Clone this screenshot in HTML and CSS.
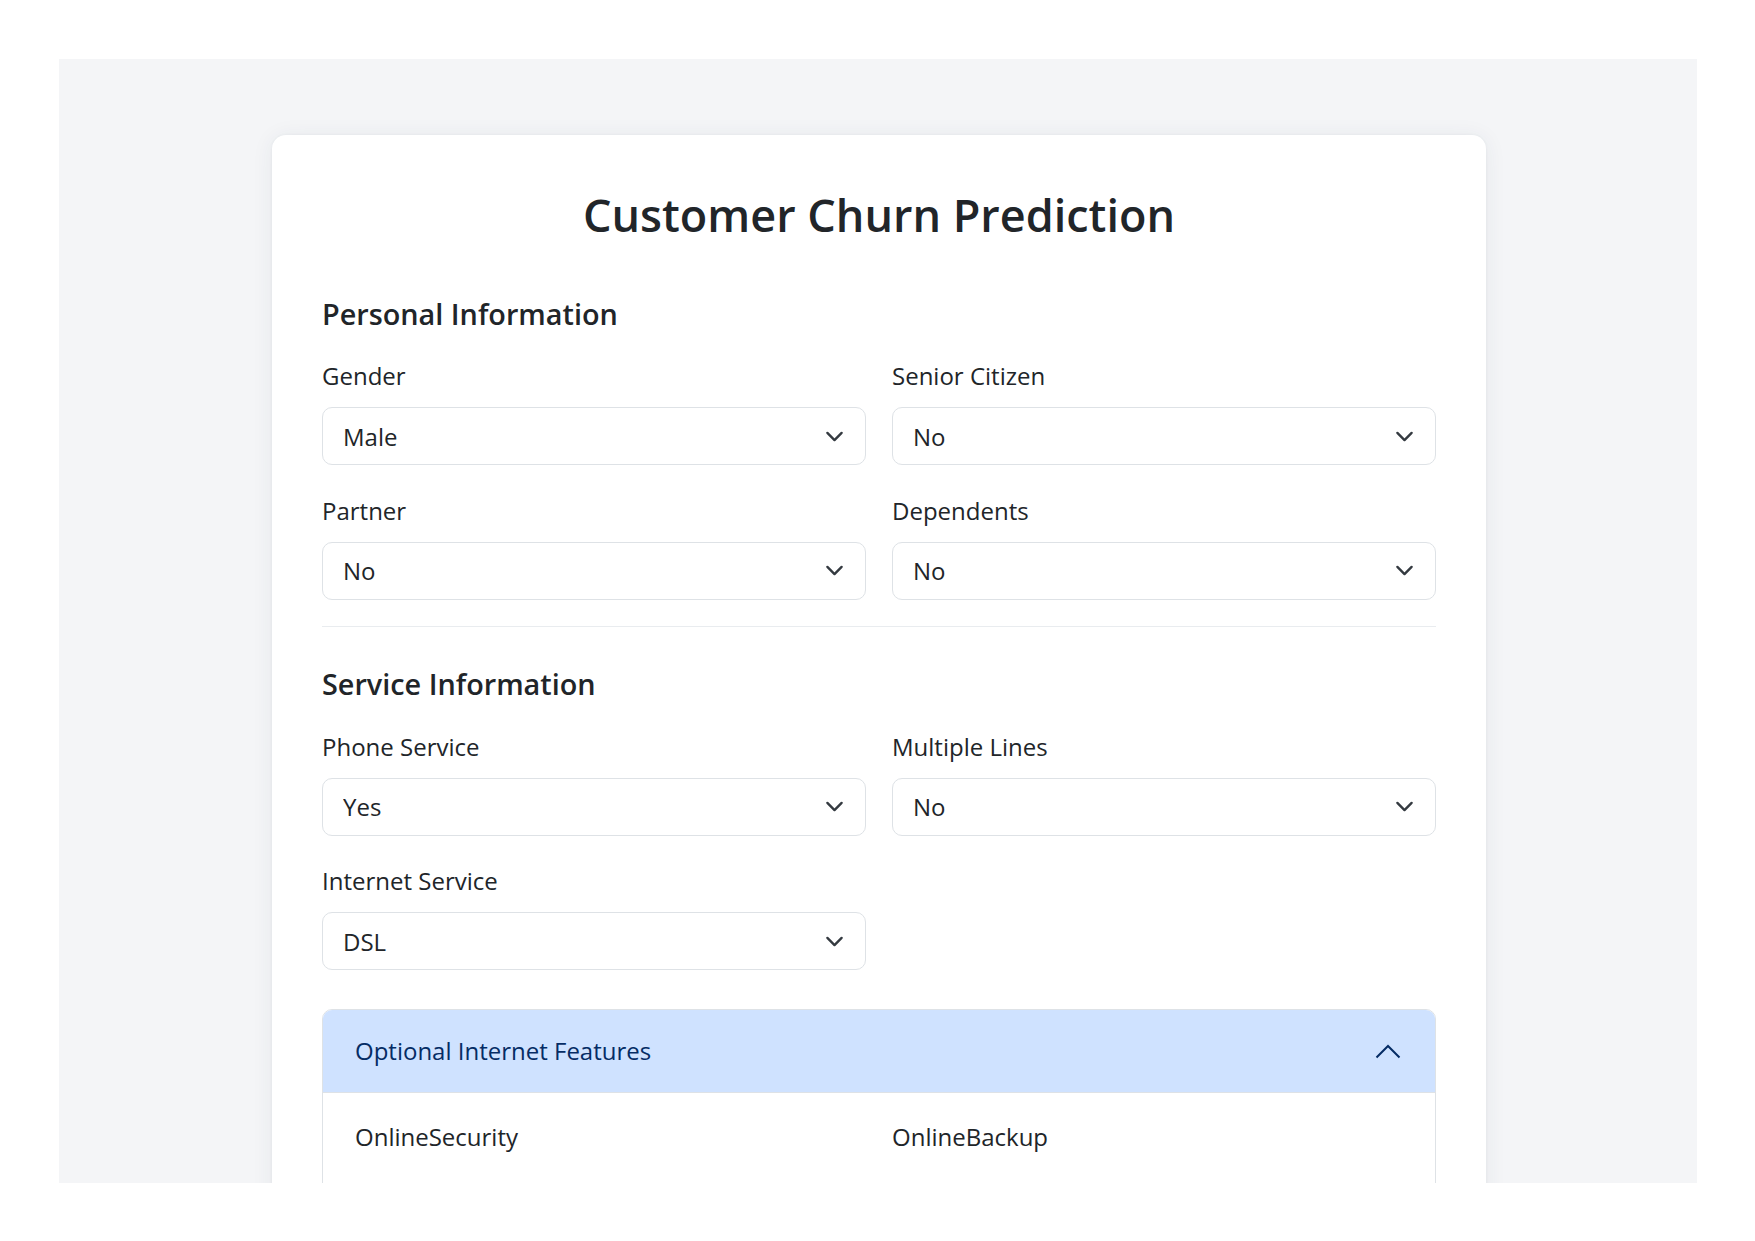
FILE: index.html
```
<!DOCTYPE html>
<html lang="en">
<head>
<meta charset="utf-8">
<title>Customer Churn Prediction</title>
<link rel="stylesheet" href="styles.css">
</head>
<body>
<div class="viewport">
  <main class="card">
    <h1 class="title">Customer Churn Prediction</h1>

    <section class="section">
      <h2 class="section-title">Personal Information</h2>
      <div class="grid">
        <div class="field">
          <label class="label" for="gender">Gender</label>
          <div class="select-wrap">
            <select id="gender" class="select"><option>Male</option><option>Female</option></select>
            <svg class="chev" viewBox="0 0 16 16" width="19" height="19"><path d="M2 5l6 6 6-6" fill="none" stroke="#343a40" stroke-width="2" stroke-linecap="round" stroke-linejoin="round"/></svg>
          </div>
        </div>
        <div class="field">
          <label class="label" for="senior">Senior Citizen</label>
          <div class="select-wrap">
            <select id="senior" class="select"><option>No</option><option>Yes</option></select>
            <svg class="chev" viewBox="0 0 16 16" width="19" height="19"><path d="M2 5l6 6 6-6" fill="none" stroke="#343a40" stroke-width="2" stroke-linecap="round" stroke-linejoin="round"/></svg>
          </div>
        </div>
        <div class="field">
          <label class="label" for="partner">Partner</label>
          <div class="select-wrap">
            <select id="partner" class="select"><option>No</option><option>Yes</option></select>
            <svg class="chev" viewBox="0 0 16 16" width="19" height="19"><path d="M2 5l6 6 6-6" fill="none" stroke="#343a40" stroke-width="2" stroke-linecap="round" stroke-linejoin="round"/></svg>
          </div>
        </div>
        <div class="field">
          <label class="label" for="dependents">Dependents</label>
          <div class="select-wrap">
            <select id="dependents" class="select"><option>No</option><option>Yes</option></select>
            <svg class="chev" viewBox="0 0 16 16" width="19" height="19"><path d="M2 5l6 6 6-6" fill="none" stroke="#343a40" stroke-width="2" stroke-linecap="round" stroke-linejoin="round"/></svg>
          </div>
        </div>
      </div>
    </section>

    <hr class="divider">

    <section class="section">
      <h2 class="section-title">Service Information</h2>
      <div class="grid">
        <div class="field">
          <label class="label" for="phone">Phone Service</label>
          <div class="select-wrap">
            <select id="phone" class="select"><option>Yes</option><option>No</option></select>
            <svg class="chev" viewBox="0 0 16 16" width="19" height="19"><path d="M2 5l6 6 6-6" fill="none" stroke="#343a40" stroke-width="2" stroke-linecap="round" stroke-linejoin="round"/></svg>
          </div>
        </div>
        <div class="field">
          <label class="label" for="lines">Multiple Lines</label>
          <div class="select-wrap">
            <select id="lines" class="select"><option>No</option><option>Yes</option></select>
            <svg class="chev" viewBox="0 0 16 16" width="19" height="19"><path d="M2 5l6 6 6-6" fill="none" stroke="#343a40" stroke-width="2" stroke-linecap="round" stroke-linejoin="round"/></svg>
          </div>
        </div>
        <div class="field">
          <label class="label" for="internet">Internet Service</label>
          <div class="select-wrap">
            <select id="internet" class="select"><option>DSL</option><option>Fiber optic</option><option>No</option></select>
            <svg class="chev" viewBox="0 0 16 16" width="19" height="19"><path d="M2 5l6 6 6-6" fill="none" stroke="#343a40" stroke-width="2" stroke-linecap="round" stroke-linejoin="round"/></svg>
          </div>
        </div>
      </div>

      <div class="accordion">
        <div class="acc-header">
          <span class="acc-title">Optional Internet Features</span>
          <svg class="acc-chev" viewBox="0 0 26 15" width="26" height="15"><path d="M1.5 13.5L13 2l11.5 11.5" fill="none" stroke="#052c65" stroke-width="2"/></svg>
        </div>
        <div class="acc-body">
          <div class="acc-grid">
            <div class="label">OnlineSecurity</div>
            <div class="label">OnlineBackup</div>
          </div>
        </div>
      </div>
    </section>
  </main>
</div>
</body>
</html>
```
FILE: styles.css
```
* { box-sizing: border-box; }

html, body {
  margin: 0;
  padding: 0;
  background: #ffffff;
}

body {
  font-family: "Open Sans", "Noto Sans", sans-serif;
  color: #212529;
}

.viewport {
  margin: 59px 0 0 59px;
  width: 1638px;
  height: 1124px;
  overflow: hidden;
  background: #f4f5f7;
  padding-top: 76px;
  padding-left: 213px;
}

.card {
  width: 1214px;
  background: #ffffff;
  border-radius: 14px;
  padding: 50px;
  box-shadow: 0 0 3px rgba(40, 60, 90, 0.06), 0 2px 22px rgba(40, 60, 90, 0.07);
}

.title {
  margin: 0 0 53px;
  padding-top: 1px;
  font-size: 45px;
  line-height: 57.6px;
  font-weight: 600;
  text-align: center;
  color: #212529;
}

.section-title {
  margin: 0 0 27px;
  font-size: 28.8px;
  line-height: 34.6px;
  font-weight: 600;
  color: #212529;
}

.grid {
  display: grid;
  grid-template-columns: 1fr 1fr;
  column-gap: 26px;
  row-gap: 27.5px;
}

.label {
  display: block;
  font-size: 24px;
  line-height: 36px;
  color: #212529;
}

.field .label {
  margin-bottom: 13px;
}

.select-wrap {
  position: relative;
}

.select {
  display: block;
  width: 100%;
  height: 58px;
  margin: 0;
  padding: 0 60px 0 20px;
  font-family: "Open Sans", "Noto Sans", sans-serif;
  font-size: 24px;
  color: #212529;
  background: #ffffff;
  border: 1px solid #dee2e6;
  border-radius: 10px;
  appearance: none;
  -webkit-appearance: none;
  outline: none;
}

.chev {
  position: absolute;
  right: 22px;
  top: 50%;
  margin-top: -9.5px;
  pointer-events: none;
}

.divider {
  margin: 26.5px 0 40px;
  border: 0;
  border-top: 1px solid #e9ecef;
  height: 0;
}

.accordion {
  margin-top: 39px;
  border: 1px solid #dee2e6;
  border-radius: 10px 10px 0 0;
  overflow: hidden;
}

.acc-header {
  height: 83px;
  display: flex;
  align-items: center;
  justify-content: space-between;
  padding: 0 34px 0 32px;
  background: #cfe2ff;
  border-bottom: 1px solid #dee2e6;
}

.acc-title {
  font-size: 24px;
  line-height: 36px;
  color: #052c65;
}

.acc-body {
  padding: 26px 32px 60px;
  background: #ffffff;
}

.acc-grid {
  display: grid;
  grid-template-columns: 1fr 1fr;
  column-gap: 26px;
}
```
